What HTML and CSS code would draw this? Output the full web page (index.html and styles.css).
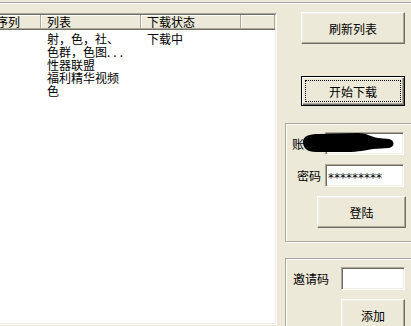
FILE: index.html
```html
<!DOCTYPE html>
<html lang="zh-CN">
<head>
<meta charset="utf-8">
<title>下载列表</title>
<link rel="stylesheet" href="styles.css">
</head>
<body>
<div class="topline"></div>
<div class="main">
  <div class="left">
    <div class="list">
      <div class="list-inner">
        <div class="grid head">
          <div class="hcell hcell-first">序列</div>
          <div class="hcell">列表</div>
          <div class="hcell">下载状态</div>
          <div class="hcell"></div>
        </div>
        <div class="grid row">
          <div class="cell"></div>
          <div class="cell">射，色，社、<br>色群，色图<span class="dots">...</span><br>性器联盟<br>福利精华视频<br>色</div>
          <div class="cell">下载中</div>
          <div class="cell"></div>
        </div>
      </div>
    </div>
  </div>
  <div class="right">
    <button class="btn btn-refresh">刷新列表</button>
    <button class="btn btn-default btn-start"><span class="focus">开始下载</span></button>
    <div class="group group-login">
      <div class="field-row">
        <span class="label label-user">账号</span>
        <div class="input"></div>
      </div>
      <div class="field-row field-row-2">
        <span class="label label-pass">密码</span>
        <div class="input input-pass">*********</div>
      </div>
      <button class="btn btn-login">登陆</button>
      <svg class="redact" viewBox="285 123 140 119" width="140" height="119" aria-hidden="true">
        <path d="M303 142 C303 136 309 134 319 134 L358 133 C367 133 371 137 378 138 L389 139 C395 140 395 147 389 148 L373 149 C365 150 360 152 346 152 L316 152 C307 152 303 148 303 142 Z" fill="#000"/>
      </svg>
    </div>
    <div class="group group-invite">
      <div class="field-row">
        <span class="label label-invite">邀请码</span>
        <div class="input input-invite"></div>
      </div>
      <button class="btn btn-add">添加</button>
    </div>
  </div>
</div>
</body>
</html>
```
FILE: styles.css
```css
* { box-sizing: border-box; }
html, body { margin: 0; padding: 0; }
body {
  width: 411px;
  height: 326px;
  overflow: hidden;
  background: #ECE9D8;
  color: #000;
  font: 12px/13px "Noto Sans CJK SC", "Liberation Sans", sans-serif;
}
.topline {
  margin-top: 2px;
  height: 2px;
  border-top: 1px solid #ACA899;
  border-bottom: 1px solid #fff;
}
.main { display: flex; }
.left {
  flex: none;
  width: 287px;
  margin-left: -10px;
  padding-top: 9px;
}
.list {
  height: 312px;
  border: 1px solid;
  border-color: #ACA899 #fff #fff #ACA899;
}
.list-inner {
  height: 100%;
  border: 1px solid;
  border-color: #716F64 #F1EFE2 #F1EFE2 #716F64;
  background: #fff;
}
.grid {
  display: grid;
  grid-template-columns: 49px 100px 100px 1fr;
}
.head {
  background: #ECE9D8;
  border-bottom: 1px solid #716F64;
}
.hcell {
  height: 14px;
  padding-left: 6px;
  border-right: 1px solid #ACA899;
  border-bottom: 1px solid #ACA899;
  box-shadow: inset 1px 1px 0 #fff;
  white-space: nowrap;
}
.hcell-first { padding-left: 4px; }
.row { padding-top: 2px; }
.cell { padding-left: 6px; white-space: nowrap; }
.dots { letter-spacing: 3px; }

.right { flex: none; width: 140px; }
.btn {
  display: block;
  padding: 0;
  font: inherit;
  color: #000;
  background: #ECE9D8;
  border: 1px solid;
  border-color: #fff #716F64 #716F64 #fff;
  box-shadow: inset -1px -1px 0 #ACA899, inset 1px 1px 0 #F1EFE2;
}
.btn-refresh { margin: 8px 0 0 24px; width: 104px; height: 32px; }
.btn-default {
  border: 1px solid #000;
  box-shadow: inset 1px 1px 0 #fff, inset -1px -1px 0 #716F64, inset -2px -2px 0 #ACA899;
}
.btn-start { margin: 32px 0 0 24px; width: 104px; height: 30px; padding: 3px; }
.focus {
  display: flex;
  align-items: center;
  justify-content: center;
  height: 100%;
  border: 1px dotted #000;
}
.group {
  position: relative;
  margin-left: 8px;
  width: 140px;
  border: 1px solid #ACA899;
  box-shadow: inset 1px 1px 0 #fff, 1px 1px 0 #fff;
}
.group-login { margin-top: 17px; height: 119px; padding-top: 8px; }
.group-invite { margin-top: 16px; height: 80px; padding-top: 8px; }
.field-row { display: flex; align-items: center; height: 23px; }
.field-row-2 { margin-top: 9px; }
.label { flex: none; width: 39px; white-space: nowrap; }
.label-user { padding-left: 6px; }
.label-pass { padding-left: 11px; }
.label-invite { width: 55px; padding-left: 7px; }
.input {
  flex: none;
  width: 79px;
  height: 23px;
  background: #fff;
  border: 1px solid;
  border-color: #ACA899 #fff #fff #ACA899;
  box-shadow: inset 1px 1px 0 #716F64, inset -1px -1px 0 #F1EFE2;
}
.input-pass {
  padding: 7px 0 0 2px;
  font: 12px/13px "DejaVu Sans", sans-serif;
}
.input-invite { width: 64px; }
.btn-login { margin: 9px 0 0 31px; width: 89px; height: 32px; }
.btn-add { margin: 9px 0 0 55px; width: 64px; height: 32px; }
.redact { position: absolute; left: -1px; top: -1px; }
```
